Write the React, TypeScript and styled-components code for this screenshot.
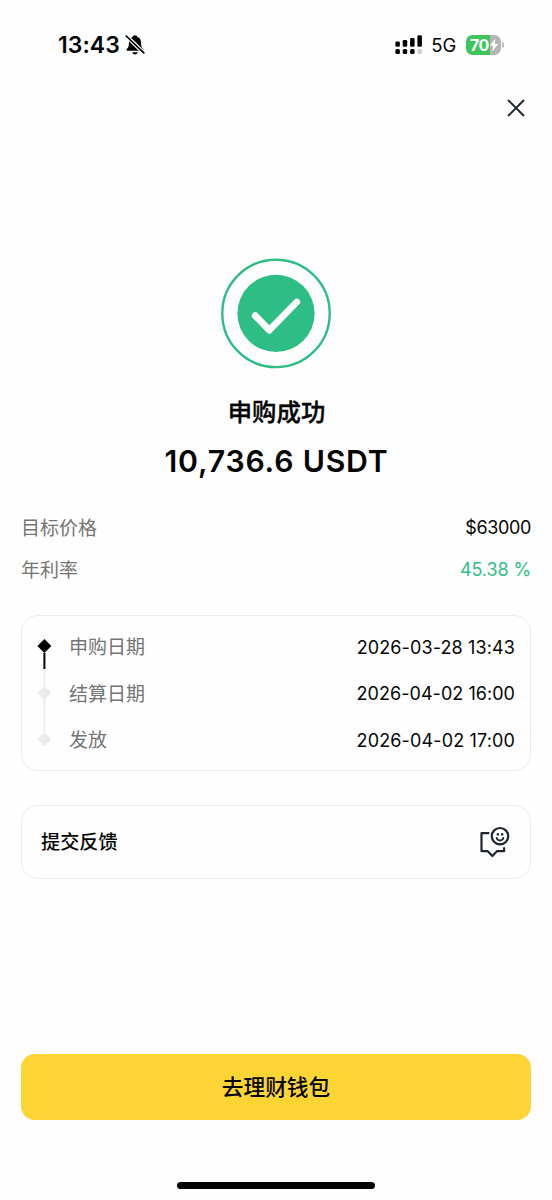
import React from "react";
import styled, { createGlobalStyle } from "styled-components";

const GlobalStyle = createGlobalStyle`
  * { box-sizing: border-box; }
  body { margin: 0; background: #fefefe; }
  button { font: inherit; border: 0; background: none; padding: 0; color: inherit; cursor: pointer; }
`;

const Screen = styled.div`
  width: 552px;
  height: 1200px;
  overflow: hidden;
  display: flex;
  flex-direction: column;
  background: #fefefe;
  color: #050505;
  font-family: Inter, "Noto Sans CJK SC", sans-serif;
  svg { display: block; flex: none; }
`;

const StatusBar = styled.header`
  height: 90px;
  padding: 0 48px 0 58px;
  display: flex;
  align-items: center;
  justify-content: space-between;
`;

const StatusGroup = styled.div<{ $gap: number }>`
  display: flex;
  align-items: center;
  gap: ${(p) => p.$gap}px;
`;

const Clock = styled.span`
  font-size: 23px;
  font-weight: 600;
  line-height: 28px;
  letter-spacing: 0.05px;
`;

const Network = styled.span`
  font-size: 18.5px;
  line-height: 24px;
  letter-spacing: -0.2px;
  margin: 0 4px 0 2px;
`;

const Battery = styled.div`
  width: 35px;
  height: 20px;
  border-radius: 6.5px;
  background: linear-gradient(to right, #3bc55b 70%, #b5b5b7 70%);
  display: flex;
  align-items: center;
  padding-left: 4px;
  color: #fff;
  font-size: 16px;
  font-weight: 700;
  line-height: 20px;
  letter-spacing: -0.6px;
`;

const BatteryTip = styled.i`
  width: 2px;
  height: 6px;
  margin-left: 1px;
  border-radius: 0 2px 2px 0;
  background: #bbb;
`;

const Row = styled.div`
  display: flex;
  align-items: center;
`;

const Toolbar = styled.nav`
  height: 36px;
  padding: 0 26px;
  display: flex;
  align-items: center;
  justify-content: flex-end;
`;

const Result = styled.section`
  padding-top: 131px;
  display: flex;
  flex-direction: column;
  align-items: center;
`;

const Title = styled.h1`
  margin: 26px 0 0 1px;
  font-size: 24.4px;
  font-weight: 500;
  line-height: 34px;
  -webkit-text-stroke: 0.35px #050505;
`;

const Amount = styled.p`
  margin: 12px 0 0 1px;
  font-size: 30.2px;
  font-weight: 600;
  line-height: 40px;
  letter-spacing: 0.8px;
`;

const Summary = styled.dl`
  margin: 26px 21px 0;
`;

const Detail = styled.div<{ $height: number }>`
  display: flex;
  height: ${(p) => p.$height}px;
  align-items: center;
  justify-content: space-between;
`;

const Label = styled.dt`
  padding-top: 1px;
  font-size: 19px;
  line-height: 28px;
  color: #747474;
`;

const Value = styled.dd<{ $positive?: boolean; $tracking?: number }>`
  margin: 0;
  font-size: 18px;
  line-height: 28px;
  font-feature-settings: "calt" 0;
  letter-spacing: ${(p) => p.$tracking ?? 0}px;
  color: ${(p) => (p.$positive ? "#31bd86" : "#050505")};
`;

const Card = styled.section`
  margin: 0 21px;
  border: 1.5px solid #ececec;
  border-radius: 17px;
`;

const Timeline = styled(Card)`
  height: 156px;
  flex: none;
  margin-top: 24px;
  padding: 7px 15px 0 14px;
  display: flex;
  gap: 16px;
`;

const Steps = styled.dl`
  margin: 0;
  padding-top: 1.4px;
  flex: 1;
`;

const Feedback = styled(Card)`
  height: 74px;
  flex: none;
  margin-top: 34px;
  padding: 0 20px 1px 19px;
  display: flex;
  align-items: center;
  justify-content: space-between;
`;

const FeedbackText = styled.span`
  font-size: 19.2px;
  font-weight: 500;
  line-height: 28px;
`;

const Primary = styled.button`
  && {
    margin: 175px 21px 0;
    padding-bottom: 4px;
    height: 66px;
    flex: none;
    border-radius: 14px;
    background: #fcd535;
    font-size: 21.7px;
    font-weight: 500;
  }
`;

const HomeIndicator = styled.div`
  width: 198px;
  height: 7px;
  flex: none;
  margin: 62px auto 0;
  border-radius: 4px;
  background: #000;
`;

const BellOff = () => (
  <svg width="20" height="22" viewBox="0 0 20 22">
    <path
      d="M10 1.2c-1.3 0-2.2.8-2.4 1.8C5.100 3.800 4 5.900 4 8.400c0 3.700-.7 4.900-2 6.400-.9 1-.5 2 .7 2h14.600c1.200 0 1.600-1 .7-2-1.300-1.500-2-2.700-2-6.400 0-2.500-1.100-4.600-3.600-5.400-.2-1-1.100-1.800-2.400-1.800ZM7.300 18.200h5.400c-.2 1.300-1.300 2.200-2.700 2.200s-2.500-.9-2.700-2.200Z"
      fill="#000"
    />
    <path d="M1 1.800 19 19" stroke="#fefefe" strokeWidth="4" />
    <path d="M1.200 2 18.800 18.800" stroke="#000" strokeWidth="1.700" strokeLinecap="round" />
  </svg>
);

const Signal = () => (
  <svg width="28" height="20" viewBox="0 0 28 20">
    <g fill="#000">
      <rect x="0.400" y="6.400" width="4.500" height="5.400" rx="1.300" />
      <rect x="7.700" y="4.900" width="4.500" height="6.900" rx="1.300" />
      <rect x="15.100" y="2.900" width="4.500" height="8.900" rx="1.300" />
      <rect x="22.400" y="0.200" width="4.500" height="11.600" rx="1.300" />
      <rect x="0.400" y="13.900" width="4.500" height="5" rx="1.500" />
      <rect x="7.700" y="13.900" width="4.500" height="5" rx="1.500" />
      <rect x="15.100" y="13.900" width="4.500" height="5" rx="1.500" />
    </g>
    <rect x="22.400" y="13.900" width="4.500" height="5" rx="1.500" fill="#cfcfcf" />
  </svg>
);

const Bolt = () => (
  <svg width="10" height="14" viewBox="0 0 9 13">
    <path d="M5.800.5.700 7.300h3.100L2.900 12.500 8.300 5.500H5Z" fill="#fff" />
  </svg>
);

const CloseIcon = () => (
  <svg width="20" height="20" viewBox="0 0 20 20">
    <path d="m2 2 16 16M18 2 2 18" stroke="#1e2430" strokeWidth="1.900" />
  </svg>
);

const SuccessIcon = () => (
  <svg width="112" height="112" viewBox="0 0 112 112">
    <circle cx="56" cy="56.400" r="53.700" fill="none" stroke="#2ebd85" strokeWidth="2.400" />
    <circle cx="56" cy="56.400" r="38.600" fill="#2ebd85" />
    <path
      d="m35.200 58.700 14.100 14.500L76.800 45"
      fill="none"
      stroke="#fefefe"
      strokeWidth="6.800"
      strokeLinecap="round"
      strokeLinejoin="round"
    />
  </svg>
);

const Track = () => (
  <svg width="17" height="140" viewBox="0 0 17 140">
    <path d="M8.400 46v17M8.400 76v33" stroke="#ebebeb" strokeWidth="1.600" />
    <path d="M8.400 30v16" stroke="#000" strokeWidth="2" />
    <path d="m8.400 16 7 7-7 7-7-7Z" fill="#000" />
    <path d="m8.400 62.700 7 7-7 7-7-7ZM8.400 109.300l7 7-7 7-7-7Z" fill="#ebebeb" />
  </svg>
);

const FeedbackIcon = () => (
  <svg
    width="32"
    height="34"
    viewBox="0 0 32 34"
    fill="none"
    stroke="#1e2430"
    strokeWidth="2.200"
    strokeLinecap="round"
    strokeLinejoin="round"
  >
    <path d="M10.400 8.200H3.500V26.200H9.800L14.400 31l4.500-4.800h7.200v-3" />
    <circle cx="22" cy="11.200" r="8.200" />
    <path d="M18.700 12.900c.4 1.700 1.700 2.600 3.300 2.600s2.900-.9 3.300-2.600" strokeWidth="1.800" />
    <path d="M18.700 8.200H21v2.300h-2.300ZM23 8.200h2.300v2.300H23Z" fill="#1e2430" stroke="none" />
  </svg>
);

const steps = [
  { label: "申购日期", time: "2026-03-28 13:43", tracking: 0.12 },
  { label: "结算日期", time: "2026-04-02 16:00", tracking: 0.04 },
  { label: "发放", time: "2026-04-02 17:00", tracking: 0.14 },
];

export default function App() {
  return (
    <Screen>
      <GlobalStyle />
      <StatusBar>
        <StatusGroup $gap={5}>
          <Clock>13:43</Clock>
          <BellOff />
        </StatusGroup>
        <StatusGroup $gap={6}>
          <Signal />
          <Network>5G</Network>
          <Row>
            <Battery>
              70
              <Bolt />
            </Battery>
            <BatteryTip />
          </Row>
        </StatusGroup>
      </StatusBar>
      <Toolbar>
        <button aria-label="关闭">
          <CloseIcon />
        </button>
      </Toolbar>
      <Result>
        <SuccessIcon />
        <Title>申购成功</Title>
        <Amount>10,736.6 USDT</Amount>
      </Result>
      <Summary>
        <Detail $height={42}>
          <Label>目标价格</Label>
          <Value $tracking={-0.35}>$63000</Value>
        </Detail>
        <Detail $height={42}>
          <Label>年利率</Label>
          <Value $positive $tracking={-0.1}>45.38 %</Value>
        </Detail>
      </Summary>
      <Timeline>
        <Track />
        <Steps>
          {steps.map(({ label, time, tracking }) => (
            <Detail key={label} $height={46.6}>
              <Label>{label}</Label>
              <Value $tracking={tracking}>{time}</Value>
            </Detail>
          ))}
        </Steps>
      </Timeline>
      <Feedback>
        <FeedbackText>提交反馈</FeedbackText>
        <FeedbackIcon />
      </Feedback>
      <Primary>去理财钱包</Primary>
      <HomeIndicator />
    </Screen>
  );
}
